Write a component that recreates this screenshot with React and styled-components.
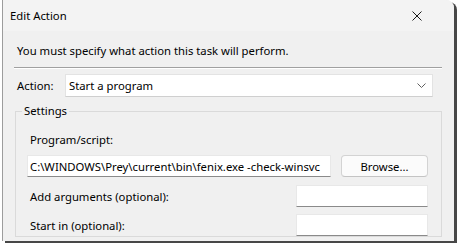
import React from 'react';
import styled, { createGlobalStyle } from 'styled-components';

const Global = createGlobalStyle`
  html, body { margin: 0; padding: 0; background: #ffffff; }
  body {
    font-family: "Segoe UI", "Noto Sans", sans-serif;
    font-size: 11.3px;
    color: #000;
  }
  * { box-sizing: border-box; }
`;

const Page = styled.div`
  width: 458px;
  height: 246px;
  overflow: hidden;
  background: #ffffff;
`;

const Window = styled.div`
  margin-left: 2px;
  width: 452px;
  height: 241px;
  background: #f0f0f0;
  border-left: 1px solid #9c9c9c;
  border-top-right-radius: 8px;
  box-shadow: 3px 2px 0 #474747;
  overflow: hidden;
  display: flex;
  flex-direction: column;
`;

const TitleBar = styled.div`
  height: 31px;
  flex: none;
  display: flex;
  align-items: center;
  justify-content: space-between;
  padding: 0 32px 0 7px;
  background: #f3f3f3;
`;

const Title = styled.span`
  line-height: 16px;
`;

const CloseIcon = styled.svg`
  width: 10px;
  height: 10px;
  display: block;
`;

const Body = styled.div`
  flex: 1;
  padding: 12px 12px 0 11px;
  display: flex;
  flex-direction: column;
`;

const Instruction = styled.div`
  line-height: 16px;
  padding-left: 3px;
`;

const Separator = styled.div`
  margin-top: 8px;
  height: 2px;
  border-top: 1px solid #a0a0a0;
  border-bottom: 1px solid #ffffff;
`;

const ActionRow = styled.div`
  margin-top: 5px;
  display: flex;
  align-items: center;
  padding-left: 3px;
  padding-right: 9px;
`;

const Label = styled.span`
  line-height: 16px;
  width: ${(p) => p.$width || 'auto'};
  flex: none;
`;

const Select = styled.div`
  flex: 1;
  height: 23px;
  background: #fff;
  border: 1px solid #e3e3e3;
  border-bottom-color: #cfcfcf;
  display: flex;
  align-items: center;
  justify-content: space-between;
  padding: 0 6px 0 3px;
`;

const Chevron = styled.svg`
  width: 9px;
  height: 5px;
  display: block;
`;

const Group = styled.fieldset`
  margin: 6px 0 0 1px;
  padding: 0 13px 0 11px;
  border: 1px solid #dadada;
  min-width: 0;
`;

const Legend = styled.legend`
  margin-left: -5px;
  padding: 0 2px;
  line-height: 16px;
`;

const FieldLabel = styled.div`
  margin-top: 13px;
  line-height: 16px;
  padding-left: 3px;
`;

const Row = styled.div`
  margin-top: ${(p) => p.$top}px;
  display: flex;
  align-items: center;
  gap: 10px;
`;

const RowLabel = styled.span`
  flex: 1;
  line-height: 16px;
  padding-left: 3px;
  padding-top: 2px;
`;

const TextBox = styled.div`
  width: ${(p) => p.$width}px;
  flex: ${(p) => (p.$grow ? 1 : 'none')};
  height: 22px;
  background: #fff;
  border: 1px solid #e8e8e8;
  border-bottom: 1px solid #8a8a8a;
  display: flex;
  align-items: center;
  padding-left: 2px;
  white-space: nowrap;
  overflow: hidden;
`;

const Button = styled.div`
  width: 87px;
  flex: none;
  height: 22px;
  background: #fbfbfb;
  border: 1px solid #d3d3d3;
  border-bottom-color: #c4c4c4;
  border-radius: 4px;
  display: flex;
  align-items: center;
  justify-content: center;
`;

export default function App() {
  return (
    <Page>
      <Global />
      <Window>
        <TitleBar>
          <Title>Edit Action</Title>
          <CloseIcon viewBox="0 0 10 10">
            <path d="M0.5 0.5 L9.5 9.5 M9.5 0.5 L0.5 9.5" stroke="#1a1a1a" strokeWidth="1" fill="none" />
          </CloseIcon>
        </TitleBar>
        <Body>
          <Instruction>You must specify what action this task will perform.</Instruction>
          <Separator />
          <ActionRow>
            <Label $width="48px">Action:</Label>
            <Select>
              <span>Start a program</span>
              <Chevron viewBox="0 0 9 5">
                <path d="M0.5 0.5 L4.5 4.5 L8.5 0.5" stroke="#606060" strokeWidth="1" fill="none" />
              </Chevron>
            </Select>
          </ActionRow>
          <Group>
            <Legend>Settings</Legend>
            <FieldLabel>Program/script:</FieldLabel>
            <Row $top={7}>
              <TextBox $grow>C:\WINDOWS\Prey\current\bin\fenix.exe -check-winsvc</TextBox>
              <Button>Browse...</Button>
            </Row>
            <Row $top={8}>
              <RowLabel>Add arguments (optional):</RowLabel>
              <TextBox $width={132} />
            </Row>
            <Row $top={7}>
              <RowLabel>Start in (optional):</RowLabel>
              <TextBox $width={132} />
            </Row>
          </Group>
        </Body>
      </Window>
    </Page>
  );
}
